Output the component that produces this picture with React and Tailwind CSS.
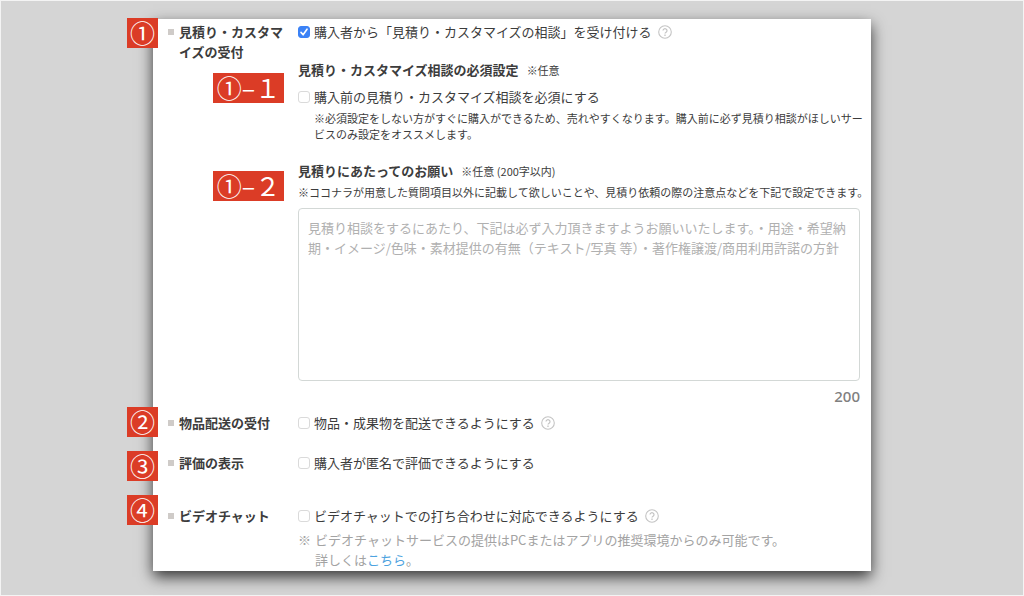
import React from "react";

function Marker({ children, className = "" }) {
  return (
    <span
      aria-hidden="true"
      className={`absolute flex h-[30px] items-center justify-center whitespace-pre bg-[#db3c26] pb-[2px] text-[25px] leading-none font-normal text-white ${className}`}
    >
      {children}
    </span>
  );
}

function Help() {
  return (
    <button type="button" aria-label="ヘルプ" className="shrink-0 text-[#c4c4c4]">
      <svg viewBox="0 0 14 14" className="block size-[14px]" fill="none" stroke="currentColor">
        <circle cx="7" cy="7" r="6.3" strokeWidth="1.1" />
        <path d="M5 5.6a2 1.9 0 1 1 3.1 1.6c-.7.45-1.1.7-1.1 1.4" strokeWidth="1.2" />
        <path d="M7 9.6v1.3" strokeWidth="1.3" />
      </svg>
    </button>
  );
}

function Check({ id, label, defaultChecked, help }) {
  return (
    <div className="flex items-center gap-[6px]">
      <div className="flex items-center gap-1">
        <span className="relative block size-3 shrink-0">
          <input
            id={id}
            type="checkbox"
            defaultChecked={defaultChecked}
            className="peer block size-3 appearance-none rounded-[3px] border border-[#dadada] bg-white checked:border-[#3b82f6] checked:bg-[#3b82f6]"
          />
          <svg
            viewBox="0 0 12 12"
            className="pointer-events-none absolute inset-0 hidden size-3 peer-checked:block"
            fill="none"
            stroke="#fff"
            strokeWidth="1.6"
            strokeLinecap="round"
            strokeLinejoin="round"
          >
            <path d="M3 6.4 5.1 8.8 9 3.2" />
          </svg>
        </span>
        <label htmlFor={id}>{label}</label>
      </div>
      {help && <Help />}
    </div>
  );
}

function Row({ title, marker, children, className = "" }) {
  return (
    <section className={`relative flex ${className}`}>
      {marker}
      <h2 className="flex w-[130px] shrink-0 gap-[5px] pr-2 font-bold">
        <span className="mt-[7px] size-[6px] shrink-0 bg-[#cfcbc8]" />
        <span>{title}</span>
      </h2>
      <div className="min-w-0 flex-1">{children}</div>
    </section>
  );
}

export default function App() {
  return (
    <main className="min-h-screen border border-[#f4f4f4] bg-[#d5d5d5] pt-[18px] pb-[22px] font-['Noto_Sans_CJK_JP','Noto_Sans',sans-serif] text-[13px] leading-5 text-[#3c3c3c]">
      <form className="mx-auto w-full max-w-[718px] bg-white pt-[3px] pr-[11px] pb-px pl-[15px] shadow-[0_6px_14px_rgba(0,0,0,0.75)]">
        <Row
          title="見積り・カスタマイズの受付"
          marker={<Marker className="-top-1 -left-[41px] w-[31px]">①</Marker>}
        >
          <Check id="estimate" defaultChecked help label="購入者から「見積り・カスタマイズの相談」を受け付ける" />

          <div className="relative mt-[18px]">
            <Marker className="top-[13px] -left-[85px] w-[71px]">①–１</Marker>
            <h3 className="font-bold">
              見積り・カスタマイズ相談の必須設定
              <span className="ml-2 text-[11px] font-normal">※任意</span>
            </h3>
            <div className="mt-[7px]">
              <Check id="required" label="購入前の見積り・カスタマイズ相談を必須にする" />
            </div>
            <p className="mt-[3px] -mr-2 pl-4 text-[11px] leading-4">
              ※必須設定をしない方がすぐに購入ができるため、売れやすくなります。購入前に必ず見積り相談がほしいサービスのみ設定をオススメします。
            </p>
          </div>

          <div className="relative mt-[19px]">
            <Marker className="top-[10px] -left-[85px] w-[71px]">①–２</Marker>
            <label htmlFor="request" className="block font-bold">
              見積りにあたってのお願い
              <span className="ml-2 text-[11px] font-normal">※任意 (200字以内)</span>
            </label>
            <p className="mt-[3px] -mr-[11px] text-[11px] leading-4">
              ※ココナラが用意した質問項目以外に記載して欲しいことや、見積り依頼の際の注意点などを下記で設定できます。
            </p>
            <textarea
              id="request"
              placeholder="見積り相談をするにあたり、下記は必ず入力頂きますようお願いいたします。・用途・希望納期・イメージ/色味・素材提供の有無（テキスト/写真 等）・著作権譲渡/商用利用許諾の方針"
              className="mt-2 block h-[173px] w-full resize-none rounded-[4px] border border-[#d3d8d6] bg-white py-[9px] pr-1 pl-[9px] placeholder:text-[#b0b0b0]"
            />
            <p className="mt-[5px] text-right font-['Noto_Sans',sans-serif] text-[15px] font-medium text-[#808080]">200</p>
          </div>
        </Row>

        <Row
          className="mt-[7px]"
          title="物品配送の受付"
          marker={<Marker className="-top-[6px] -left-[41px] w-[31px]">②</Marker>}
        >
          <Check id="delivery" help label="物品・成果物を配送できるようにする" />
        </Row>

        <Row
          className="mt-5"
          title="評価の表示"
          marker={<Marker className="-top-[2px] -left-[41px] w-[31px]">③</Marker>}
        >
          <Check id="anonymous" label="購入者が匿名で評価できるようにする" />
        </Row>

        <Row
          className="mt-[33px]"
          title="ビデオチャット"
          marker={<Marker className="-top-[11px] -left-[41px] w-[31px]">④</Marker>}
        >
          <Check id="video" help label="ビデオチャットでの打ち合わせに対応できるようにする" />
          <p className="mt-1 flex gap-1 text-[#a3a3a3]">
            <span>※</span>
            <span>
              ビデオチャットサービスの提供はPCまたはアプリの推奨環境からのみ可能です。
              <br />
              詳しくは
              <a href="#video-chat" className="text-[#4da3e0]">
                こちら
              </a>
              。
            </span>
          </p>
        </Row>
      </form>
    </main>
  );
}
